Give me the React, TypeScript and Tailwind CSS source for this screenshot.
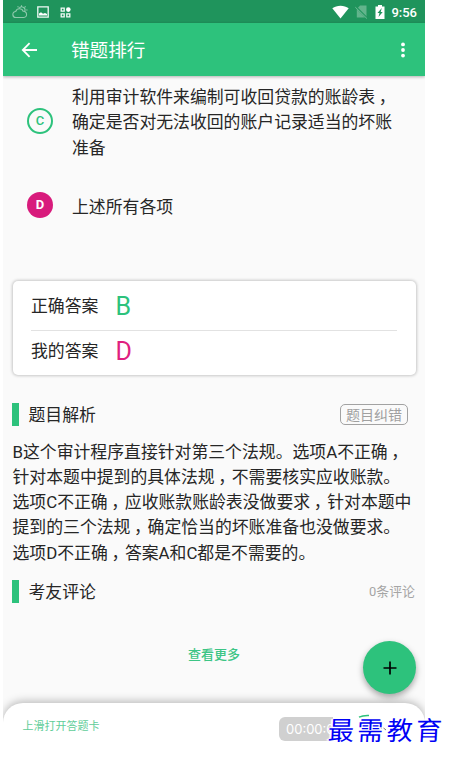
import { Fragment } from 'react';

const optionC = ['利用审计软件来编制可收回贷款的账龄表，', '确定是否对无法收回的账户记录适当的坏账', '准备'];

const analysis = [
  'B这个审计程序直接针对第三个法规。选项A不正确，',
  '针对本题中提到的具体法规，不需要核实应收账款。',
  '选项C不正确，应收账款账龄表没做要求，针对本题中',
  '提到的三个法规，确定恰当的坏账准备也没做要求。',
  '选项D不正确，答案A和C都是不需要的。',
];

// half-width commas padded on both sides, so that they sit mid-cell
function Line({ text }: { text: string }) {
  const parts = text.split('，');
  return (
    <div className="whitespace-nowrap">
      {parts.map((part, i) => (
        <Fragment key={i}>
          {part}
          {i < parts.length - 1 && <span className="ml-[3.6px] mr-[5.1px] [font-feature-settings:'halt']">，</span>}
        </Fragment>
      ))}
    </div>
  );
}

function StatusBar() {
  return (
    <div className="flex h-[23px] items-center bg-[#1f945c] pl-[9px] pr-[8px] pt-px">
      <svg width="16" height="14" viewBox="0 0 16 14" fill="none" stroke="#8fc9ad" strokeWidth="1.1">
        <path d="M4 12.5a3 3 0 0 1-.3-6 4 4 0 0 1 7.500-.2 3.1 3.1 0 0 1 .5 6.2Z" />
        <path d="M7 3.6a3 3 0 0 1 5.6 2.8M9.5.2v1.3M13.6 1.4l-1 1M15.5 5h-1.3M5.6 1.4l.9.9" />
      </svg>
      <svg className="ml-[9px]" width="12" height="12" viewBox="0 0 12 12">
        <path d="M.8.8h10.4v10.4H.8Z" fill="none" stroke="#f2faf6" strokeWidth="1.3" />
        <path d="M2 9.5V7.6l2-1.4 2 1.6 2-.8 2 1v1.5Z" fill="#fff" />
      </svg>
      <svg className="ml-[11px]" width="11" height="11" viewBox="0 0 11 11" fill="none" stroke="#f2faf6" strokeWidth="1.3">
        <path d="M1.2 1.2h3v3h-3ZM1.2 6.8h3v3h-3ZM6.8 6.8h3v3h-3Z" />
        <circle cx="8.3" cy="2.6" r="2.3" fill="#fff" stroke="none" />
      </svg>
      <div className="flex-1" />
      <svg width="17" height="14" viewBox="0 0 17 14">
        <path d="M8.5 13.6.3 3.3C4.8-.2 12.2-.2 16.7 3.3Z" fill="#fff" />
      </svg>
      <svg className="ml-[6px]" width="13" height="14" viewBox="0 0 13 14">
        <path d="M5 .5h6.5v12H1.8V4Z" fill="#62b48c" />
        <path d="m.3 1.5 12 12" stroke="#1f945c" strokeWidth="2" />
        <path d="m.3 2.2 11.6 11.3" stroke="#72bc98" strokeWidth="1" />
      </svg>
      <svg className="ml-[7px]" width="10" height="14" viewBox="0 0 10 14">
        <path d="M3 0h4v1.4h2.5V14H.5V1.4H3Z" fill="#fff" />
        <path d="M6.8 3 2.5 8h2l-1 4L7.7 7h-2Z" fill="#1f945c" />
      </svg>
      <span className="ml-[6px] text-[13px] font-medium leading-none text-white">9:56</span>
    </div>
  );
}

function AppBar() {
  return (
    <div className="relative flex h-[53px] items-center bg-[#2dc27c] pl-[18px] pr-[20px] shadow-[0_1px_3px_rgba(0,0,0,0.3)]">
      <svg width="17" height="16" viewBox="0 0 17 16" fill="none" stroke="#fff" strokeWidth="1.8">
        <path d="M16 8H2M8.6 1.2 1.8 8l6.8 6.8" />
      </svg>
      <h1 className="ml-[33px] pt-[3px] text-[18.6px] leading-none text-white">错题排行</h1>
      <svg className="ml-auto" width="4" height="16" viewBox="0 0 4 16" fill="#fff">
        <circle cx="2" cy="2.4" r="1.9" />
        <circle cx="2" cy="8" r="1.9" />
        <circle cx="2" cy="13.6" r="1.9" />
      </svg>
    </div>
  );
}

function AnswerRow({ label, value, color }: { label: string; value: string; color: string }) {
  return (
    <div className="flex h-[45px] items-center">
      <span className="w-[84.5px]">{label}</span>
      <span className={`text-[25px] leading-none ${color}`}>{value}</span>
    </div>
  );
}

export default function App() {
  return (
    <div className="relative h-[762px] w-[450px] overflow-hidden bg-white pl-[3px] font-[Roboto,'Noto_Sans_CJK_SC',sans-serif] text-[16.85px] leading-[25.3px] text-[#262626]">
      <div className="relative flex h-[762px] w-[422px] flex-col overflow-hidden bg-[#fafafa]">
        <StatusBar />
        <AppBar />

        <div className="flex items-center pl-6 pt-[9px]">
          <div className="mt-[-4px] flex size-[26px] items-center justify-center rounded-full border-2 border-[#2dc27c] text-[13px] font-medium text-[#2dc27c]">C</div>
          <div className="ml-[19px]">
            {optionC.map((line) => (
              <Line key={line} text={line} />
            ))}
          </div>
        </div>
        <div className="mt-[30px] flex items-center pl-6">
          <div className="-mt-px flex size-[26px] items-center justify-center rounded-full bg-[#d81b7c] text-[13px] font-bold text-white">D</div>
          <div className="ml-[19px] pt-1">上述所有各项</div>
        </div>

        <div className="ml-[9.5px] mr-[9px] mt-[61px] h-[94px] rounded-[5px] bg-white pl-[18.5px] pr-[19px] pt-[3px] shadow-[0_0_3px_1px_rgba(0,0,0,0.2)]">
          <AnswerRow label="正确答案" value="B" color="text-[#2dc27c]" />
          <div className="mt-[1px] border-t border-[#e2e2e2]" />
          <div className="-mt-[2px]">
            <AnswerRow label="我的答案" value="D" color="text-[#e01f80]" />
          </div>
        </div>

        <div className="mt-[28px] flex h-[23px] items-center pl-[9px] pr-[17px]">
          <div className="h-[23px] w-[7px] bg-[#2dc27c]" />
          <h2 className="ml-[9.5px] pt-[2px]">题目解析</h2>
          <button className="ml-auto h-[21px] w-[68px] whitespace-nowrap rounded-[5px] border border-[#a2a2a2] text-[14px] leading-[20px] text-[#a0a0a0]">题目纠错</button>
        </div>
        <div className="mt-[13.4px] pl-[9.5px]">
          {analysis.map((line) => (
            <Line key={line} text={line} />
          ))}
        </div>

        <div className="mt-[13.6px] flex h-[23px] items-center pl-[9px] pr-[10px]">
          <div className="h-[23px] w-[7px] bg-[#2dc27c]" />
          <h2 className="ml-[9.5px] pt-[2px]">考友评论</h2>
          <span className="ml-auto pt-px text-[12.9px] text-[#a5a5a5]">0条评论</span>
        </div>
        <div className="mt-[39px] text-center text-[13px] font-medium text-[#3cc585]">查看更多</div>

        <div className="mt-auto flex h-[59px] shrink-0 rounded-t-[20px] bg-white pl-[19.5px] shadow-[0_-2px_8px_rgba(0,0,0,0.25)]">
          <span className="mt-[11px] text-[11px] text-[#5fcd99]">上滑打开答题卡</span>
          <span className="ml-auto mr-[76px] mt-[14px] h-[24px] w-[70px] overflow-hidden rounded-[6px] bg-[#d0d0d0] pl-[7px] font-[Inter] text-[13px] leading-[24px] text-white [clip-path:inset(0_16px_0_0)]">00:00:00</span>
        </div>

        <button className="absolute left-[360px] top-[641px] flex size-[53px] items-center justify-center rounded-full bg-[#2dc27c] shadow-[0_3px_6px_rgba(0,0,0,0.35)]">
          <svg width="14" height="14" viewBox="0 0 14 14" stroke="#000" strokeWidth="1.7">
            <path d="M7 .5v13M.5 7h13" />
          </svg>
        </button>
      </div>

      <svg className="absolute left-[358px] top-[714px]" width="32" height="24" viewBox="0 0 32 24" fill="none">
        <path d="M1 3.2Q5 1.200 11 1.5" stroke="#2dc27c" strokeWidth="1.5" />
        <path d="m21 15 3-1m1.500 0 2.500 2M20 20l2 2" stroke="#777" />
      </svg>
      <div className="absolute left-[328px] top-[710px] -skew-x-3 whitespace-nowrap font-['Noto_Sans_CJK_SC',sans-serif] text-[26px] leading-[38px] tracking-[3.4px] text-[#0000f5] [text-shadow:-2px_0_1px_#fff,2px_0_1px_#fff,0_-1px_1px_#fff,0_2px_1px_#fff]">
        最需教育
      </div>
    </div>
  );
}
